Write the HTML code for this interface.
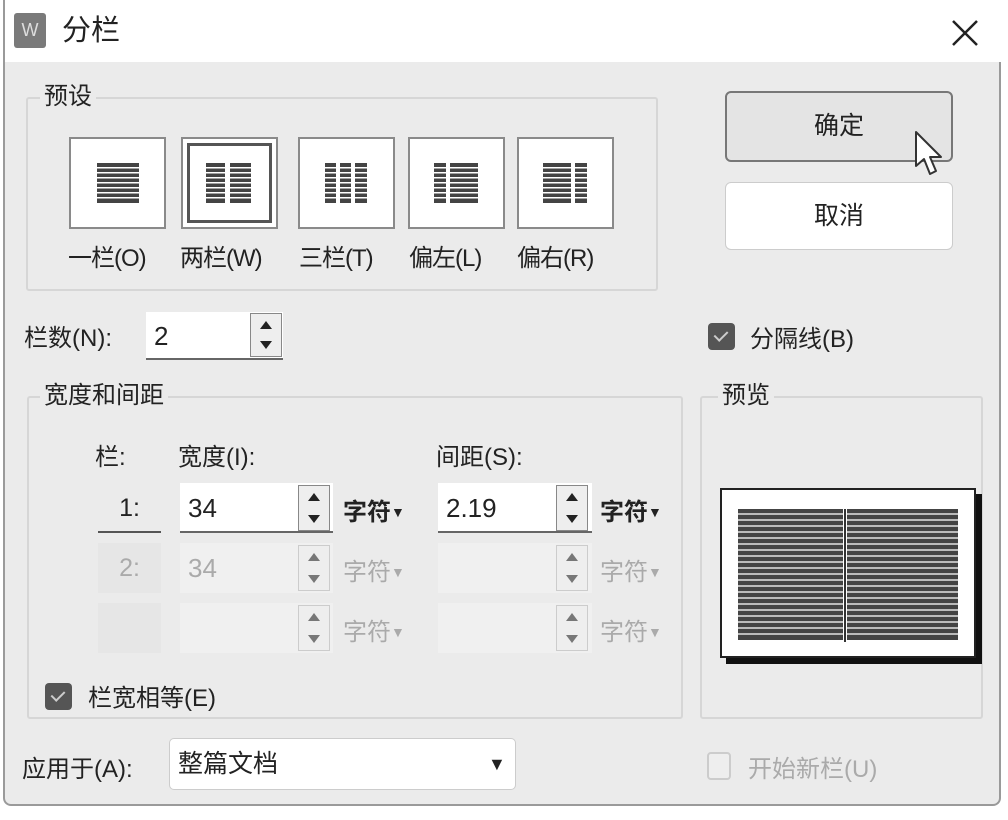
<!DOCTYPE html>
<html><head><meta charset="utf-8"><style>
*{margin:0;padding:0;box-sizing:border-box}
body{width:1008px;height:820px;background:#fff;position:relative;overflow:hidden;font-family:"Liberation Sans","Noto Sans CJK SC",sans-serif;color:#222;font-size:24px}
.a{position:absolute;white-space:nowrap}
.dlg{position:absolute;left:3px;top:0;width:998px;height:806px;background:#ebebeb;border:2px solid #9a9a9a;border-top:none;border-radius:0 0 8px 8px}
.title{position:absolute;left:3px;top:0;width:998px;height:62px;background:#fff;border-left:2px solid #9a9a9a}
.grp{position:absolute;border:2px solid #d6d6d6;border-radius:3px}
.lg{position:absolute;background:#ebebeb;padding:0 4px;line-height:26px;font-size:24px}
.tile{position:absolute;top:137px;width:97px;height:92px;background:#fff;border:2px solid #8a8a8a}
.lbl{position:absolute;top:238px;font-size:24px;letter-spacing:-1px}
.in{position:absolute;background:#fff;height:50px;font-size:26px;line-height:50px;padding-left:8px}
.dis{background:#f0f0f0;color:#aaa}
.sp{position:absolute;width:32px;height:46px;border:1px solid #888;background:#eee}
.sp:before{content:"";position:absolute;left:9px;top:7px;border:6px solid transparent;border-bottom:8px solid #222;border-top:0}
.sp:after{content:"";position:absolute;left:9px;bottom:7px;border:6px solid transparent;border-top:8px solid #222;border-bottom:0}
.sp.d{border-color:#ccc}
.sp.d:before{border-bottom-color:#777}.sp.d:after{border-top-color:#777}
.unit{position:absolute;font-size:24px;font-weight:bold}
.unit small{font-size:14px;vertical-align:3px}
.unit.d{color:#aaa;font-weight:normal}
.cb{position:absolute;width:27px;height:27px;background:#555;border-radius:4px}
.cb:after{content:"";position:absolute;left:9px;top:5px;width:6px;height:11px;border:solid #ccc;border-width:0 2px 2px 0;transform:rotate(45deg)}
.btn{position:absolute;border-radius:6px;text-align:center;font-size:25px}
</style></head><body>
<div class="dlg"></div>
<div class="title"></div>
<div class="a" style="left:14px;top:13px;width:32px;height:35px;background:#7a7a7a;border-radius:3px;color:#ddd;font-size:18px;text-align:center;line-height:35px">W</div>
<div class="a" style="left:62px;top:13px;font-size:29px;line-height:36px">分栏</div>
<svg class="a" style="left:950px;top:18px" width="30" height="30"><path d="M3 3L27 27M27 3L3 27" stroke="#222" stroke-width="2.5"/></svg>

<div class="grp" style="left:26px;top:97px;width:632px;height:194px"></div>
<div class="lg" style="left:40px;top:84px">预设</div>
<div class="tile" style="left:69px"><svg width="93" height="88"><g fill="#444"><rect x="26" y="24" width="42" height="40"/></g><g fill="#fff"><rect x="26" y="28" width="42" height="1.5"/><rect x="26" y="33" width="42" height="1.5"/><rect x="26" y="38" width="42" height="1.5"/><rect x="26" y="43" width="42" height="1.5"/><rect x="26" y="48" width="42" height="1.5"/><rect x="26" y="53" width="42" height="1.5"/><rect x="26" y="58" width="42" height="1.5"/></g></svg></div>
<div class="tile" style="left:181px"><div class="a" style="left:4px;top:4px;width:85px;height:80px;border:3px solid #555"></div><svg class="a" width="93" height="88"><g fill="#444"><rect x="23" y="24" width="19" height="40"/><rect x="47" y="24" width="21" height="40"/></g><g fill="#fff"><rect x="20" y="28" width="52" height="1.5"/><rect x="20" y="33" width="52" height="1.5"/><rect x="20" y="38" width="52" height="1.5"/><rect x="20" y="43" width="52" height="1.5"/><rect x="20" y="48" width="52" height="1.5"/><rect x="20" y="53" width="52" height="1.5"/><rect x="20" y="58" width="52" height="1.5"/></g></svg></div>
<div class="tile" style="left:298px"><svg width="93" height="88"><g fill="#444"><rect x="25" y="24" width="11" height="40"/><rect x="40" y="24" width="11" height="40"/><rect x="55" y="24" width="12" height="40"/></g><g fill="#fff"><rect x="20" y="28" width="52" height="1.5"/><rect x="20" y="33" width="52" height="1.5"/><rect x="20" y="38" width="52" height="1.5"/><rect x="20" y="43" width="52" height="1.5"/><rect x="20" y="48" width="52" height="1.5"/><rect x="20" y="53" width="52" height="1.5"/><rect x="20" y="58" width="52" height="1.5"/></g></svg></div>
<div class="tile" style="left:408px"><svg width="93" height="88"><g fill="#444"><rect x="24" y="24" width="12" height="40"/><rect x="40" y="24" width="28" height="40"/></g><g fill="#fff"><rect x="20" y="28" width="52" height="1.5"/><rect x="20" y="33" width="52" height="1.5"/><rect x="20" y="38" width="52" height="1.5"/><rect x="20" y="43" width="52" height="1.5"/><rect x="20" y="48" width="52" height="1.5"/><rect x="20" y="53" width="52" height="1.5"/><rect x="20" y="58" width="52" height="1.5"/></g></svg></div>
<div class="tile" style="left:517px"><svg width="93" height="88"><g fill="#444"><rect x="24" y="24" width="28" height="40"/><rect x="56" y="24" width="12" height="40"/></g><g fill="#fff"><rect x="20" y="28" width="52" height="1.5"/><rect x="20" y="33" width="52" height="1.5"/><rect x="20" y="38" width="52" height="1.5"/><rect x="20" y="43" width="52" height="1.5"/><rect x="20" y="48" width="52" height="1.5"/><rect x="20" y="53" width="52" height="1.5"/><rect x="20" y="58" width="52" height="1.5"/></g></svg></div>
<div class="lbl a" style="left:68px">一栏(O)</div>
<div class="lbl a" style="left:180px">两栏(W)</div>
<div class="lbl a" style="left:299px">三栏(T)</div>
<div class="lbl a" style="left:409px">偏左(L)</div>
<div class="lbl a" style="left:517px">偏右(R)</div>

<div class="btn" style="left:725px;top:91px;width:228px;height:71px;background:#e4e4e4;border:2px solid #777;line-height:66px">确定</div>
<div class="btn" style="left:725px;top:182px;width:228px;height:68px;background:#fff;border:1px solid #ccc;line-height:66px">取消</div>

<div class="a" style="left:24px;top:318px">栏数(N):</div>
<div class="in" style="left:146px;top:312px;width:137px;height:48px;line-height:48px;border-bottom:2px solid #666">2</div>
<div class="sp" style="left:250px;top:313px;height:44px"></div>

<div class="cb" style="left:708px;top:323px"></div>
<div class="a" style="left:750px;top:319px">分隔线(B)</div>

<div class="grp" style="left:27px;top:396px;width:656px;height:323px"></div>
<div class="lg" style="left:40px;top:383px">宽度和间距</div>
<div class="a" style="left:95px;top:437px">栏:</div>
<div class="a" style="left:178px;top:437px">宽度(I):</div>
<div class="a" style="left:436px;top:437px">间距(S):</div>

<div class="a" style="left:98px;top:483px;width:63px;height:50px;border-bottom:2px solid #555;text-align:center;line-height:50px;font-size:25px">1:</div>
<div class="in" style="left:180px;top:483px;width:153px;border-bottom:2px solid #666">34</div>
<div class="sp" style="left:298px;top:485px"></div>
<div class="unit a" style="left:343px;top:492px">字符<small>▼</small></div>
<div class="in" style="left:438px;top:483px;width:154px;border-bottom:2px solid #666">2.19</div>
<div class="sp" style="left:556px;top:485px"></div>
<div class="unit a" style="left:600px;top:492px">字符<small>▼</small></div>

<div class="a" style="left:98px;top:543px;width:63px;height:50px;background:#e6e6e6;color:#aaa;text-align:center;line-height:50px;font-size:25px">2:</div>
<div class="in dis" style="left:180px;top:543px;width:153px">34</div>
<div class="sp d" style="left:298px;top:545px"></div>
<div class="unit d a" style="left:343px;top:552px">字符<small>▼</small></div>
<div class="in dis" style="left:438px;top:543px;width:154px"></div>
<div class="sp d" style="left:556px;top:545px"></div>
<div class="unit d a" style="left:600px;top:552px">字符<small>▼</small></div>

<div class="a" style="left:98px;top:603px;width:63px;height:50px;background:#e6e6e6"></div>
<div class="in dis" style="left:180px;top:603px;width:153px"></div>
<div class="sp d" style="left:298px;top:605px"></div>
<div class="unit d a" style="left:343px;top:612px">字符<small>▼</small></div>
<div class="in dis" style="left:438px;top:603px;width:154px"></div>
<div class="sp d" style="left:556px;top:605px"></div>
<div class="unit d a" style="left:600px;top:612px">字符<small>▼</small></div>

<div class="cb" style="left:45px;top:683px"></div>
<div class="a" style="left:88px;top:678px">栏宽相等(E)</div>

<div class="grp" style="left:700px;top:396px;width:283px;height:323px"></div>
<div class="lg" style="left:718px;top:383px">预览</div>
<div class="a" style="left:726px;top:494px;width:256px;height:170px;background:#111"></div>
<div class="a" style="left:720px;top:488px;width:256px;height:170px;background:#fff;border:2px solid #222"></div>
<svg class="a" style="left:738px;top:509px" width="222" height="133"><g fill="#444"><rect x="0" y="0" width="220" height="131"/></g><g fill="#bbb"><rect x="0" y="4" width="220" height="2"/><rect x="0" y="10" width="220" height="2"/><rect x="0" y="16" width="220" height="2"/><rect x="0" y="22" width="220" height="2"/><rect x="0" y="28" width="220" height="2"/><rect x="0" y="34" width="220" height="2"/><rect x="0" y="40" width="220" height="2"/><rect x="0" y="46" width="220" height="2"/><rect x="0" y="52" width="220" height="2"/><rect x="0" y="58" width="220" height="2"/><rect x="0" y="64" width="220" height="2"/><rect x="0" y="70" width="220" height="2"/><rect x="0" y="76" width="220" height="2"/><rect x="0" y="82" width="220" height="2"/><rect x="0" y="88" width="220" height="2"/><rect x="0" y="94" width="220" height="2"/><rect x="0" y="100" width="220" height="2"/><rect x="0" y="106" width="220" height="2"/><rect x="0" y="112" width="220" height="2"/><rect x="0" y="118" width="220" height="2"/><rect x="0" y="124" width="220" height="2"/></g><rect x="105" y="0" width="4" height="133" fill="#fff"/><rect x="106" y="0" width="2" height="133" fill="#333"/></svg>

<div class="a" style="left:22px;top:749px">应用于(A):</div>
<div class="a" style="left:169px;top:738px;width:347px;height:52px;background:#fff;border:1px solid #ccc;border-radius:5px;line-height:50px;padding-left:8px;font-size:25px">整篇文档<span class="a" style="left:318px;top:0;font-size:18px">▼</span></div>
<div class="a" style="left:707px;top:752px;width:24px;height:28px;border:2px solid #ccc;border-radius:4px;background:#eee"></div>
<div class="a" style="left:748px;top:749px;color:#aaa">开始新栏(U)</div>

<svg class="a" style="left:912px;top:130px" width="40" height="52"><path d="M4 2L4 36L12 29L18 44L24 41L18 27L29 27Z" fill="#fff" stroke="#333" stroke-width="2" stroke-linejoin="round"/></svg>
</body></html>
